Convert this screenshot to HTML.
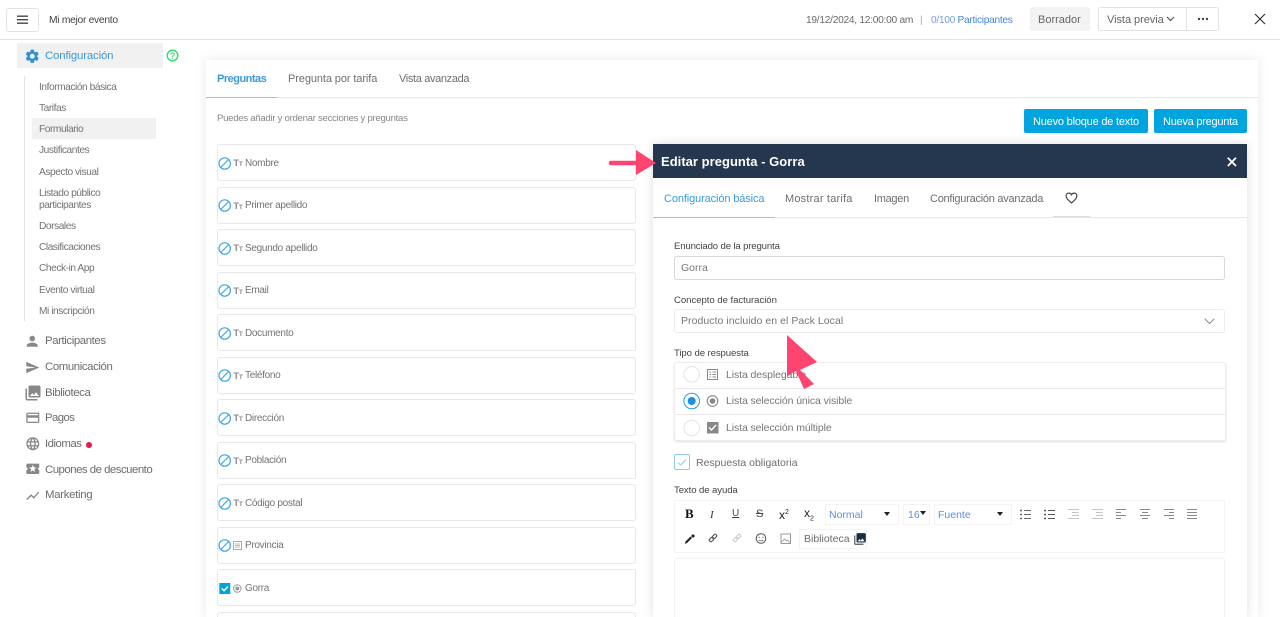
<!DOCTYPE html>
<html lang="es"><head><meta charset="utf-8"><title>Formulario</title>
<style>
html,body{margin:0;padding:0;width:1280px;height:617px;overflow:hidden;background:#fff;font-family:"Liberation Sans",sans-serif;color:#6a6a6a}
*{box-sizing:border-box}
#page{position:relative;width:1280px;height:617px;overflow:hidden;background:#fff}
.a{position:absolute}
.t{position:absolute;white-space:nowrap;line-height:14px;height:14px}
.sub{font-size:10.2px;letter-spacing:-.45px;color:#737373}
.main{font-size:11.4px;color:#6c6c6c;letter-spacing:-.3px}
.row{position:absolute;left:217px;width:419px;height:37px;border:1px solid #e8e8e8;border-radius:3px;background:#fff}
.row .t{left:27px;top:11.5px;font-size:10px;letter-spacing:-.3px;color:#747474}
.row .tr{position:absolute;left:15.5px;top:12px;font-size:9px;line-height:12px;color:#8a8a8a;font-weight:bold;letter-spacing:-.2px}
.row .tr small{font-size:6.5px}
.row svg{position:absolute;left:0;top:10.5px}
.tab{font-size:11px;color:#6f6f6f}
.lab{font-size:9.6px;color:#444;letter-spacing:-.1px}
.sp{position:absolute;top:30px;font-size:10px;line-height:12px;color:#8a8a8a}
</style></head><body><div id="page">

<svg width="0" height="0" style="position:absolute"><defs><g id="ban"><circle cx="6.7" cy="7.5" r="5.7" fill="none" stroke="#3ea7e6" stroke-width="1.2"/><path d="M2.7 11.500l8-8" stroke="#3ea7e6" stroke-width="1.2"/></g></defs></svg>

<span class="sp" style="left:228px">y</span><span class="sp" style="left:253px">g</span><span class="sp" style="left:281px">p</span><span class="sp" style="left:350px">p</span><span class="sp" style="left:363px">p</span><span class="sp" style="left:371px">g</span><span class="sp" style="left:501px">p</span>

<!-- header -->
<div class="a" style="left:0;top:0;width:1280px;height:40px;background:#fff;border-bottom:1px solid #e4e4e4"></div>
<div class="a" style="left:6px;top:7.5px;width:33px;height:24px;border:1px solid #e2e2e2;border-radius:3px"></div>
<svg class="a" style="left:16px;top:15px" width="13" height="10"><path d="M1 1.200h11M1 4.700h11M1 8.200h11" stroke="#444" stroke-width="1.3"/></svg>
<div class="t" style="left:49px;top:13.5px;font-size:10.3px;color:#444;letter-spacing:-.3px">Mi mejor evento</div>
<div class="t" style="left:806px;top:13.5px;font-size:10.2px;color:#6a6a6a;letter-spacing:-.27px">19/12/2024, 12:00:00 am</div>
<div class="t" style="left:920px;top:13.5px;font-size:10px;color:#9ab">|</div>
<div class="t" style="left:931px;top:13.5px;font-size:10.2px;color:#7a9fd8;letter-spacing:-.3px">0/100 <span style="color:#4a86d8">Participantes</span></div>
<div class="a" style="left:1030px;top:7px;width:60px;height:24px;background:#f3f3f3;border-radius:3px"></div>
<div class="t" style="left:1038px;top:13px;font-size:11px;color:#666">Borrador</div>
<div class="a" style="left:1098px;top:7px;width:121px;height:24px;border:1px solid #e2e2e2;border-radius:3px"></div>
<div class="a" style="left:1186px;top:8px;width:1px;height:22px;background:#e2e2e2"></div>
<div class="t" style="left:1107px;top:13px;font-size:11px;color:#666;letter-spacing:-.05px">Vista previa</div>
<svg class="a" style="left:1166px;top:16px" width="10" height="7"><path d="M1 1l3.500 3.500L8 1" stroke="#555" stroke-width="1.2" fill="none"/></svg>
<svg class="a" style="left:1197px;top:17px" width="12" height="5"><circle cx="2" cy="2" r="1.2" fill="#444"/><circle cx="6" cy="2" r="1.2" fill="#444"/><circle cx="10" cy="2" r="1.2" fill="#444"/></svg>
<svg class="a" style="left:1254px;top:13px" width="12" height="12"><path d="M1 1l10 10M11 1L1 11" stroke="#333" stroke-width="1.2"/></svg>

<!-- sidebar -->
<div class="a" style="left:17px;top:43px;width:146px;height:25px;background:#f1f1f1"></div>
<svg class="a" style="left:24px;top:47.7px" width="16.5" height="16.5" viewBox="0 0 24 24"><path fill="#2f8fd3" d="M19.140 12.940c.04-.3.06-.61.06-.94 0-.32-.02-.64-.07-.94l2.030-1.580a.49.49 0 0 0 .12-.61l-1.920-3.320a.488.488 0 0 0-.59-.22l-2.390.96c-.5-.38-1.030-.7-1.620-.94l-.36-2.540a.484.484 0 0 0-.48-.41h-3.840c-.24 0-.43.17-.47.41l-.36 2.540c-.59.24-1.130.57-1.620.94l-2.390-.96c-.22-.08-.47 0-.59.22L2.740 8.870c-.12.21-.08.47.12.61l2.030 1.580c-.05.3-.09.63-.09.94s.02.64.07.94l-2.030 1.580a.49.49 0 0 0-.12.61l1.920 3.320c.12.22.37.29.59.22l2.390-.96c.5.38 1.030.7 1.620.94l.36 2.540c.05.24.24.41.48.41h3.840c.24 0 .44-.17.47-.41l.36-2.540c.59-.24 1.130-.56 1.620-.94l2.390.96c.22.08.47 0 .59-.22l1.920-3.320c.12-.22.07-.47-.12-.61l-2.010-1.580zM12 15.600c-1.980 0-3.600-1.620-3.600-3.600s1.620-3.600 3.600-3.600 3.600 1.620 3.600 3.600-1.620 3.600-3.600 3.600z"/></svg>
<div class="t main" style="left:45px;top:49px;color:#3d9ad9;letter-spacing:-.15px">Configuración</div>
<svg class="a" style="left:166px;top:49px" width="13" height="13"><circle cx="6.5" cy="6.5" r="5.3" fill="none" stroke="#22e060" stroke-width="1.3"/><text x="6.5" y="9.8" font-size="9" font-family="Liberation Sans" text-anchor="middle" fill="#22c05a">?</text></svg>
<div class="a" style="left:24px;top:76px;width:1px;height:245px;background:#e3e3e3"></div>
<div class="a" style="left:32px;top:118px;width:124px;height:21px;background:#f1f1f1"></div>
<div class="t sub" style="left:39px;top:81px">Información básica</div>
<div class="t sub" style="left:39px;top:102px">Tarifas</div>
<div class="t sub" style="left:39px;top:123px">Formulario</div>
<div class="t sub" style="left:39px;top:144px">Justificantes</div>
<div class="t sub" style="left:39px;top:166px">Aspecto visual</div>
<div class="t sub" style="left:39px;top:187px">Listado público</div>
<div class="t sub" style="left:39px;top:199px">participantes</div>
<div class="t sub" style="left:39px;top:220px">Dorsales</div>
<div class="t sub" style="left:39px;top:241px">Clasificaciones</div>
<div class="t sub" style="left:39px;top:262px">Check-in App</div>
<div class="t sub" style="left:39px;top:284px">Evento virtual</div>
<div class="t sub" style="left:39px;top:305px">Mi inscripción</div>

<svg class="a" style="left:24.2px;top:332.7px" width="16.5" height="16.5" viewBox="0 0 24 24"><path fill="#888" d="M12 12c2.210 0 4-1.790 4-4s-1.790-4-4-4-4 1.790-4 4 1.790 4 4 4zm0 2c-2.670 0-8 1.340-8 4v2h16v-2c0-2.660-5.330-4-8-4z"/></svg>
<div class="t main" style="left:45px;top:334px;letter-spacing:-.4px">Participantes</div>
<svg class="a" style="left:25px;top:359.5px" width="15" height="15" viewBox="0 0 24 24"><path fill="#888" d="M2.010 21L23 12 2.010 3 2 10l15 2-15 2z"/></svg>
<div class="t main" style="left:45px;top:360px;letter-spacing:-.4px">Comunicación</div>
<svg class="a" style="left:23.5px;top:383.5px" width="18" height="18" viewBox="0 0 24 24"><path fill="#888" d="M22 16V4c0-1.100-.9-2-2-2H8c-1.100 0-2 .9-2 2v12c0 1.100.9 2 2 2h12c1.100 0 2-.9 2-2zm-11-4l2.030 2.710L16 11l4 5H8l3-4zM2 6v14c0 1.100.9 2 2 2h14v-2H4V6H2z"/></svg>
<div class="t main" style="left:45px;top:386px;letter-spacing:-.4px">Biblioteca</div>
<svg class="a" style="left:24.7px;top:410.2px" width="15.6" height="15.6" viewBox="0 0 24 24"><path fill="#888" d="M20 4H4c-1.110 0-1.990.89-1.990 2L2 18c0 1.110.89 2 2 2h16c1.110 0 2-.89 2-2V6c0-1.110-.89-2-2-2zm0 14H4v-6h16v6zm0-10H4V6h16v2z"/></svg>
<div class="t main" style="left:45px;top:411px;letter-spacing:-.6px">Pagos</div>
<svg class="a" style="left:24.7px;top:435.7px" width="15.6" height="15.6" viewBox="0 0 24 24"><path fill="#888" d="M11.990 2C6.470 2 2 6.480 2 12s4.470 10 9.990 10C17.520 22 22 17.520 22 12S17.520 2 11.990 2zm6.930 6h-2.950c-.32-1.250-.78-2.450-1.380-3.560 1.840.63 3.370 1.910 4.330 3.560zM12 4.040c.83 1.200 1.480 2.530 1.910 3.960h-3.820c.43-1.430 1.080-2.760 1.910-3.960zM4.260 14C4.100 13.360 4 12.690 4 12s.1-1.360.26-2h3.380c-.08.66-.14 1.320-.14 2s.06 1.340.14 2H4.260zm.82 2h2.950c.32 1.250.78 2.450 1.380 3.560-1.840-.63-3.370-1.900-4.330-3.560zm2.950-8H5.080c.96-1.660 2.490-2.930 4.330-3.560C8.810 5.550 8.350 6.750 8.030 8zM12 19.960c-.83-1.200-1.480-2.530-1.910-3.960h3.820c-.43 1.430-1.080 2.760-1.910 3.960zM14.340 14H9.660c-.09-.66-.16-1.320-.16-2s.07-1.350.16-2h4.680c.09.65.16 1.320.16 2s-.07 1.340-.16 2zm.25 5.560c.6-1.110 1.060-2.310 1.380-3.560h2.950c-.96 1.650-2.490 2.930-4.330 3.560zM16.360 14c.08-.66.14-1.320.14-2s-.06-1.340-.14-2h3.380c.16.64.26 1.310.26 2s-.1 1.360-.26 2h-3.380z"/></svg>
<div class="t main" style="left:45px;top:437px;letter-spacing:-.5px">Idiomas</div>
<div class="a" style="left:86px;top:442px;width:6px;height:6px;border-radius:50%;background:#f5104f"></div>
<svg class="a" style="left:24.7px;top:461.2px" width="15.6" height="15.6" viewBox="0 0 24 24"><path fill="#888" d="M20 12c0-1.100.9-2 2-2V6c0-1.100-.9-2-2-2H4c-1.100 0-1.990.9-1.990 2v4c1.100 0 1.990.9 1.990 2s-.89 2-2 2v4c0 1.100.9 2 2 2h16c1.100 0 2-.9 2-2v-4c-1.100 0-2-.9-2-2zm-4.420 4.800L12 14.500l-3.580 2.300 1.080-4.120-3.290-2.690 4.240-.25L12 5.800l1.540 3.950 4.240.25-3.290 2.690 1.090 4.110z"/></svg>
<div class="t main" style="left:45px;top:462.5px;letter-spacing:-.5px">Cupones de descuento</div>
<svg class="a" style="left:24.7px;top:487.7px" width="15.6" height="15.6" viewBox="0 0 24 24"><path fill="#888" d="M3.500 18.490l6-6.010 4 4L22 6.920l-1.410-1.410-7.090 7.970-4-4L2 16.990z"/></svg>
<div class="t main" style="left:45px;top:488px;letter-spacing:-.3px">Marketing</div>

<!-- main card -->
<div class="a" style="left:206px;top:60px;width:1052px;height:557px;background:#fff;box-shadow:0 0 12px rgba(0,0,0,.09)"></div>
<div class="a" style="left:206px;top:97px;width:1052px;height:1px;background:#e6e6e6"></div>
<div class="a" style="left:206px;top:97px;width:71px;height:1px;background:#8cc4ec"></div>
<div class="t tab" style="left:217px;top:72px;color:#3d9ad9;font-weight:bold;letter-spacing:-.5px">Preguntas</div>
<div class="t tab" style="left:288px;top:72px;letter-spacing:-.1px">Pregunta por tarifa</div>
<div class="t tab" style="left:399px;top:72px;letter-spacing:-.35px">Vista avanzada</div>
<div class="t" style="left:217px;top:112px;font-size:9.6px;color:#888;letter-spacing:-.28px">Puedes añadir y ordenar secciones y preguntas</div>
<div class="a" style="left:1024px;top:109px;width:124px;height:24px;background:#00a5df;border-radius:2px"></div>
<div class="t" style="left:1033px;top:114.5px;font-size:11px;color:#fff;letter-spacing:-.2px">Nuevo bloque de texto</div>
<div class="a" style="left:1154px;top:109px;width:93px;height:24px;background:#00a5df;border-radius:2px"></div>
<div class="t" style="left:1163px;top:114.5px;font-size:11px;color:#fff;letter-spacing:-.25px">Nueva pregunta</div>

<!-- question rows -->
<div class="row" style="top:144px"><svg width="16" height="16"><use href="#ban"/></svg><span class="tr">T<small>T</small></span><span class="t">Nombre</span></div>
<div class="row" style="top:186.5px"><svg width="16" height="16"><use href="#ban"/></svg><span class="tr">T<small>T</small></span><span class="t">Primer apellido</span></div>
<div class="row" style="top:229px"><svg width="16" height="16"><use href="#ban"/></svg><span class="tr">T<small>T</small></span><span class="t">Segundo apellido</span></div>
<div class="row" style="top:271.5px"><svg width="16" height="16"><use href="#ban"/></svg><span class="tr">T<small>T</small></span><span class="t">Email</span></div>
<div class="row" style="top:314px"><svg width="16" height="16"><use href="#ban"/></svg><span class="tr">T<small>T</small></span><span class="t">Documento</span></div>
<div class="row" style="top:356.5px"><svg width="16" height="16"><use href="#ban"/></svg><span class="tr">T<small>T</small></span><span class="t">Teléfono</span></div>
<div class="row" style="top:399px"><svg width="16" height="16"><use href="#ban"/></svg><span class="tr">T<small>T</small></span><span class="t">Dirección</span></div>
<div class="row" style="top:441.5px"><svg width="16" height="16"><use href="#ban"/></svg><span class="tr">T<small>T</small></span><span class="t">Población</span></div>
<div class="row" style="top:484px"><svg width="16" height="16"><use href="#ban"/></svg><span class="tr">T<small>T</small></span><span class="t">Código postal</span></div>
<div class="row" style="top:526.5px"><svg width="26" height="16"><use href="#ban"/><rect x="15.5" y="3.5" width="8" height="8" fill="none" stroke="#aaa"/><path d="M17 6h5M17 7.500h5M17 9h5" stroke="#aaa" stroke-width=".7"/></svg><span class="t">Provincia</span></div>
<div class="row" style="top:569px"><svg width="26" height="16"><rect x="1.3" y="2" width="11" height="11" fill="#00a5df"/><path d="M3.800 7.500l2.200 2.200 4-4.200" stroke="#fff" stroke-width="1.5" fill="none"/><circle cx="19.3" cy="7.5" r="3.8" fill="none" stroke="#999"/><circle cx="19.3" cy="7.5" r="2" fill="#999"/></svg><span class="t">Gorra</span></div>
<div class="row" style="top:611.5px;height:5.5px;border-bottom:0;border-radius:3px 3px 0 0"></div>

<!-- panel -->
<div class="a" style="left:653px;top:144px;width:594px;height:473px;background:#fff;box-shadow:0 0 10px rgba(0,0,0,.13)"></div>
<div class="a" style="left:653px;top:144px;width:594px;height:34px;background:#25364f"></div>
<div class="t" style="left:661px;top:154.5px;font-size:13px;font-weight:bold;color:#fff;letter-spacing:.03px">Editar pregunta - Gorra</div>
<svg class="a" style="left:1227px;top:157px" width="10" height="10"><path d="M.8.800l8.200 8.200M9 .8L.8 9" stroke="#fff" stroke-width="1.8"/></svg>
<div class="a" style="left:653px;top:217px;width:594px;height:1px;background:#e6e6e6"></div>
<div class="a" style="left:653px;top:217px;width:122px;height:1px;background:#8cc4ec"></div>
<div class="a" style="left:1053px;top:216px;width:37px;height:1px;background:#ddd"></div>
<div class="t tab" style="left:664px;top:191.5px;color:#3d9ad9;letter-spacing:-.12px">Configuración básica</div>
<div class="t tab" style="left:785px;top:191.5px;letter-spacing:.2px">Mostrar tarifa</div>
<div class="t tab" style="left:874px;top:191.5px;letter-spacing:-.3px">Imagen</div>
<div class="t tab" style="left:930px;top:191.5px;letter-spacing:-.25px">Configuración avanzada</div>
<svg class="a" style="left:1065px;top:192px" width="13" height="12" viewBox="0 0 24 22"><path fill="none" stroke="#444" stroke-width="2.2" d="M12 20C5 14 2 11 2 7c0-3 2.300-5 5-5 2 0 4 1 5 3 1-2 3-3 5-3 2.700 0 5 2 5 5 0 4-3 7-10 13z"/></svg>

<div class="t lab" style="left:674px;top:239.5px;letter-spacing:-.15px">Enunciado de la pregunta</div>
<div class="a" style="left:674px;top:256px;width:551px;height:24px;border:1px solid #d8d8d8;border-radius:3px"></div>
<div class="t" style="left:681px;top:261px;font-size:10.5px;color:#777">Gorra</div>
<div class="t lab" style="left:674px;top:293.5px;letter-spacing:-.05px">Concepto de facturación</div>
<div class="a" style="left:674px;top:309px;width:551px;height:24px;border:1px solid #ececec;border-radius:3px"></div>
<div class="t" style="left:681px;top:314px;font-size:10.5px;color:#777;letter-spacing:.05px">Producto incluido en el Pack Local</div>
<svg class="a" style="left:1204px;top:318px" width="11" height="7"><path d="M.7.700l4.800 4.800L10.300.700" stroke="#888" fill="none"/></svg>

<div class="t lab" style="left:674px;top:346.5px">Tipo de respuesta</div>
<div class="a" style="left:674px;top:362px;width:552px;height:79px;border:1px solid #ececec;border-radius:3px;box-shadow:0 1px 2px rgba(0,0,0,.12)"></div>
<div class="a" style="left:675px;top:388px;width:550px;height:1px;background:#e8e8e8"></div>
<div class="a" style="left:675px;top:414px;width:550px;height:1px;background:#e8e8e8"></div>
<svg class="a" style="left:682px;top:364px" width="40" height="76">
<circle cx="9.7" cy="10.3" r="7.8" fill="#fff" stroke="#e4e4e4"/>
<circle cx="9.7" cy="37" r="7.8" fill="#fff" stroke="#2a9be8"/><circle cx="9.7" cy="37" r="4" fill="#1890e6"/>
<circle cx="9.7" cy="64" r="7.8" fill="#fff" stroke="#e4e4e4"/>
<rect x="25.5" y="5.5" width="10" height="10" fill="none" stroke="#888"/><path d="M27.500 8h1.500M30.500 8h3.500M27.500 10.500h1.500M30.500 10.500h3.500M27.500 13h1.500M30.500 13h3.500" stroke="#888" stroke-width=".9"/>
<circle cx="30.5" cy="37" r="5.3" fill="none" stroke="#888" stroke-width="1.1"/><circle cx="30.5" cy="37" r="2.8" fill="#888"/>
<rect x="25" y="58" width="11.5" height="11.5" fill="#888"/><path d="M27 63.500l2.500 2.500 4.500-5" stroke="#fff" stroke-width="1.4" fill="none"/>
</svg>
<div class="t" style="left:726px;top:368px;font-size:10.5px;color:#777;letter-spacing:-.1px">Lista desplegable</div>
<div class="t" style="left:726px;top:394px;font-size:10.5px;color:#777;letter-spacing:-.1px">Lista selección única visible</div>
<div class="t" style="left:726px;top:421px;font-size:10.5px;color:#777;letter-spacing:-.1px">Lista selección múltiple</div>
<div class="a" style="left:674px;top:454px;width:16px;height:16px;border:1px solid #8cc9ee;border-radius:2px"></div>
<svg class="a" style="left:677px;top:458px" width="10" height="9"><path d="M1 4.500l2.500 2.500L9 1.500" stroke="#8cc9ee" fill="none"/></svg>
<div class="t" style="left:696px;top:456px;font-size:10.5px;color:#6e6e6e">Respuesta obligatoria</div>

<div class="t lab" style="left:674px;top:484px">Texto de ayuda</div>
<div class="a" style="left:674px;top:500px;width:551px;height:53px;border:1px solid #f4f4f4;border-radius:2px"></div>
<div class="a" style="left:674px;top:558px;width:551px;height:59px;border:1px solid #f1f1f1;border-bottom:0;border-radius:2px 2px 0 0"></div>

<!-- toolbar -->
<div class="t" style="left:685px;top:507px;font-family:'Liberation Serif',serif;font-weight:bold;font-size:13px;color:#111">B</div>
<div class="t" style="left:710px;top:507.5px;font-family:'Liberation Serif',serif;font-style:italic;font-size:11px;color:#333">I</div>
<div class="t" style="left:732px;top:507px;font-size:10px;color:#444;text-decoration:underline">U</div>
<div class="t" style="left:756px;top:507px;font-size:11px;color:#444;text-decoration:line-through">S</div>
<div class="t" style="left:779px;top:508px;font-size:12px;color:#222">x<sup style="font-size:7px;line-height:0">2</sup></div>
<div class="t" style="left:804px;top:506px;font-size:12px;color:#222">x<sub style="font-size:7px;line-height:0">2</sub></div>
<div class="a" style="left:825px;top:504px;width:74px;height:21px;border:1px solid #f3f3f3"></div>
<div class="t" style="left:829px;top:508px;font-size:10.5px;color:#5d90e0">Normal</div>
<div class="a" style="left:884px;top:512px;border:3.5px solid transparent;border-top:4px solid #222;border-bottom:0"></div>
<div class="a" style="left:903px;top:504px;width:27px;height:21px;border:1px solid #f3f3f3"></div>
<div class="t" style="left:908px;top:508px;font-size:10.5px;color:#5d90e0">16</div>
<div class="a" style="left:920px;top:511px;border:3.5px solid transparent;border-top:4px solid #222;border-bottom:0"></div>
<div class="a" style="left:934px;top:504px;width:78px;height:21px;border:1px solid #f3f3f3"></div>
<div class="t" style="left:938px;top:508px;font-size:10.5px;color:#5d90e0">Fuente</div>
<div class="a" style="left:997px;top:512px;border:3.5px solid transparent;border-top:4px solid #222;border-bottom:0"></div>
<svg class="a" style="left:1018px;top:508px" width="186" height="14" stroke-width="1" fill="none">
<g stroke="#666"><path d="M6 2.500h7M6 6.500h7M6 10.500h7"/><path d="M2 2.500h2M2 6.500h2M2 10.500h2" stroke-width="1.5"/></g>
<g stroke="#555"><path d="M30 2.500h7M30 6.500h7M30 10.500h7"/><path d="M26 2.500h2M26 6.500h2M26 10.500h2" stroke-width="1.5"/></g>
<g stroke="#c4c4c4"><path d="M50 1.500h11M54 4.500h7M54 7.500h7M50 10.500h11"/></g>
<g stroke="#c4c4c4"><path d="M74 1.500h11M78 4.500h7M78 7.500h7M74 10.500h11"/></g>
<g stroke="#888"><path d="M98 1.500h10M98 4.500h5M98 7.500h10M98 10.500h5"/></g>
<g stroke="#888"><path d="M122 1.500h10M124 4.500h6M122 7.500h10M124 10.500h6"/></g>
<g stroke="#888"><path d="M146 1.500h10M151 4.500h5M146 7.500h10M151 10.500h5"/></g>
<g stroke="#888"><path d="M169 1.500h10M169 4.500h10M169 7.500h10M169 10.500h10"/></g>
</svg>
<svg class="a" style="left:683px;top:532px" width="150" height="14" fill="none">
<path d="M2 12l2-1 5-5-1.500-1.500-5 5zM8 4l2-2 2 2-2 2z" fill="#222"/>
<g stroke="#555" stroke-width="1.1"><rect x="26" y="6" width="5" height="3" rx="1.5" transform="rotate(-45 28.5 7.5)"/><rect x="29" y="3" width="5" height="3" rx="1.5" transform="rotate(-45 31.5 4.5)"/></g>
<g stroke="#ccc" stroke-width="1.1"><rect x="50" y="6" width="5" height="3" rx="1.5" transform="rotate(-45 52.5 7.5)"/><rect x="53" y="3" width="5" height="3" rx="1.5" transform="rotate(-45 55.5 4.5)"/></g>
<circle cx="78" cy="6.5" r="4.8" stroke="#555"/><circle cx="76.2" cy="5.3" r=".6" fill="#555"/><circle cx="79.8" cy="5.3" r=".6" fill="#555"/><path d="M75.800 8c1.200 1.200 3.200 1.200 4.400 0" stroke="#555" stroke-width=".8"/>
<rect x="98" y="2" width="9.5" height="9.5" stroke="#999"/><path d="M98.500 10l3-3 2 2 1-1 3 3" stroke="#999" stroke-width=".8"/>
</svg>
<div class="a" style="left:799px;top:529px;width:68px;height:20px;border:1px solid #f3f3f3"></div>
<div class="t" style="left:804px;top:532px;font-size:10.5px;color:#6a6a6a">Biblioteca</div>
<svg class="a" style="left:853px;top:532px" width="14" height="14" viewBox="0 0 24 24"><path fill="#555" d="M2 6v14c0 1.100.9 2 2 2h14v-2H4V6H2z"/><rect x="6" y="2" width="16" height="16" rx="2" fill="#1d2c45"/><path d="M8 16l3-4 2 2.700L16 11l4 5z" fill="#fff"/></svg>

<!-- pink arrows -->
<svg class="a" style="left:600px;top:140px" width="240" height="260">
<path d="M11 23H42" stroke="#ff4470" stroke-width="4.5" stroke-linecap="round"/>
<path d="M36 10L56 23 36 35z" fill="#ff4470"/>
<path d="M187 195L217 222 200 230 214 244 204 249 196 231 187 236z" fill="#ff4470"/>
</svg>
</div></body></html>
